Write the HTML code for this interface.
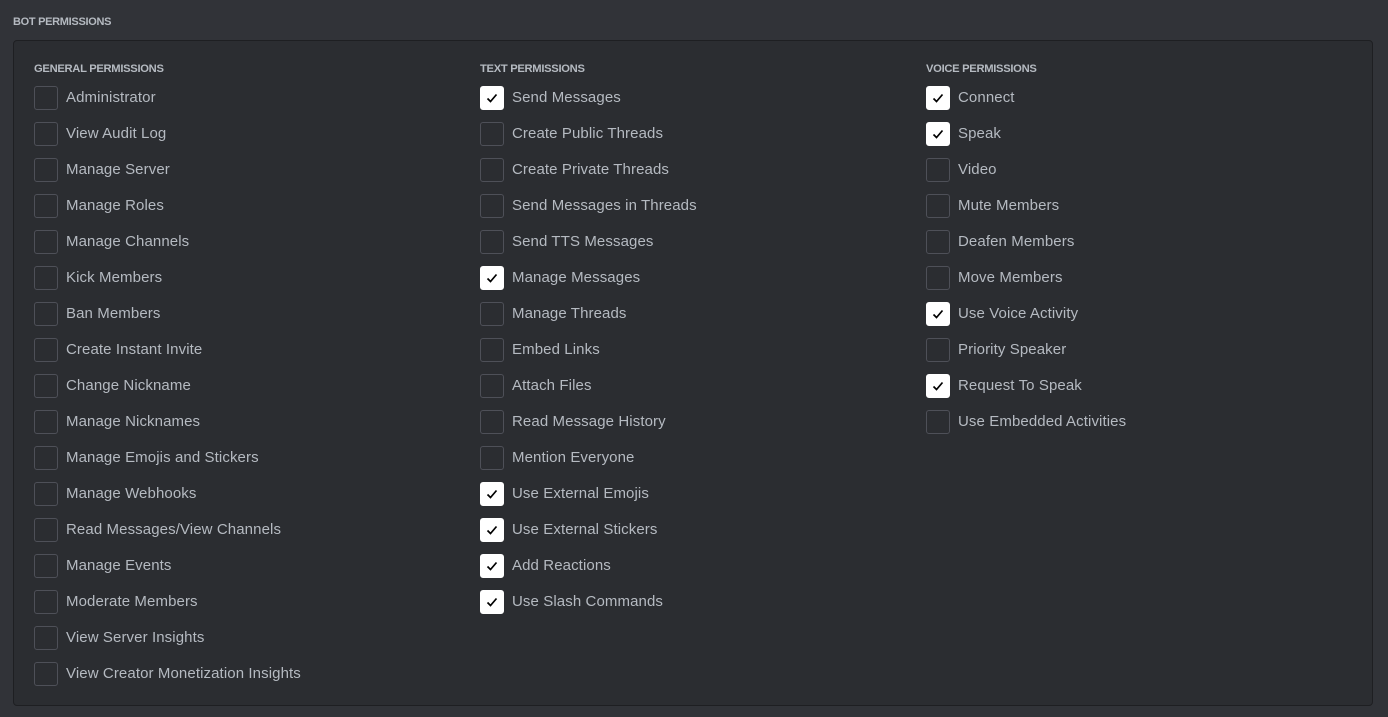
<!DOCTYPE html>
<html><head><style>
body{margin:0;width:1388px;height:717px;background:#313338;font-family:"Liberation Sans",sans-serif;overflow:hidden;position:relative}
.t{position:absolute;left:13px;top:16px;font-size:11px;font-weight:bold;color:#b5bac1;letter-spacing:-0.3px}
.p{position:absolute;left:13px;top:40px;width:1358px;height:664px;border:1px solid #1e1f22;border-radius:4px;background:#2b2d31}
.c{position:absolute;top:21px}
.h{font-size:11.2px;font-weight:bold;color:#b5bac1;height:24px;line-height:14px;letter-spacing:-0.3px}
.r{height:36px;display:flex;align-items:flex-start;font-size:15px;color:#b5bac1;letter-spacing:0.1px}
.b{width:22px;height:22px;border:1px solid #4e5058;border-radius:3px;margin-right:8px;box-sizing:content-box;display:flex;align-items:center;justify-content:center}
.k{background:#fff;border-color:#fff}
.r span{line-height:24px}
</style></head><body>
<div class="t">BOT PERMISSIONS</div>
<div class="p">
<div class="c" style="left:20px">
<div class="h">GENERAL PERMISSIONS</div>
<div class="r"><div class="b"></div><span>Administrator</span></div>
<div class="r"><div class="b"></div><span>View Audit Log</span></div>
<div class="r"><div class="b"></div><span>Manage Server</span></div>
<div class="r"><div class="b"></div><span>Manage Roles</span></div>
<div class="r"><div class="b"></div><span>Manage Channels</span></div>
<div class="r"><div class="b"></div><span>Kick Members</span></div>
<div class="r"><div class="b"></div><span>Ban Members</span></div>
<div class="r"><div class="b"></div><span>Create Instant Invite</span></div>
<div class="r"><div class="b"></div><span>Change Nickname</span></div>
<div class="r"><div class="b"></div><span>Manage Nicknames</span></div>
<div class="r"><div class="b"></div><span>Manage Emojis and Stickers</span></div>
<div class="r"><div class="b"></div><span>Manage Webhooks</span></div>
<div class="r"><div class="b"></div><span>Read Messages/View Channels</span></div>
<div class="r"><div class="b"></div><span>Manage Events</span></div>
<div class="r"><div class="b"></div><span>Moderate Members</span></div>
<div class="r"><div class="b"></div><span>View Server Insights</span></div>
<div class="r"><div class="b"></div><span>View Creator Monetization Insights</span></div>
</div>
<div class="c" style="left:466px">
<div class="h">TEXT PERMISSIONS</div>
<div class="r"><div class="b k"><svg width="14" height="14" viewBox="0 0 14 14"><path d="M2.5 7.5l3 3L11.5 3.5" fill="none" stroke="#000" stroke-width="1.7"/></svg></div><span>Send Messages</span></div>
<div class="r"><div class="b"></div><span>Create Public Threads</span></div>
<div class="r"><div class="b"></div><span>Create Private Threads</span></div>
<div class="r"><div class="b"></div><span>Send Messages in Threads</span></div>
<div class="r"><div class="b"></div><span>Send TTS Messages</span></div>
<div class="r"><div class="b k"><svg width="14" height="14" viewBox="0 0 14 14"><path d="M2.5 7.5l3 3L11.5 3.5" fill="none" stroke="#000" stroke-width="1.7"/></svg></div><span>Manage Messages</span></div>
<div class="r"><div class="b"></div><span>Manage Threads</span></div>
<div class="r"><div class="b"></div><span>Embed Links</span></div>
<div class="r"><div class="b"></div><span>Attach Files</span></div>
<div class="r"><div class="b"></div><span>Read Message History</span></div>
<div class="r"><div class="b"></div><span>Mention Everyone</span></div>
<div class="r"><div class="b k"><svg width="14" height="14" viewBox="0 0 14 14"><path d="M2.5 7.5l3 3L11.5 3.5" fill="none" stroke="#000" stroke-width="1.7"/></svg></div><span>Use External Emojis</span></div>
<div class="r"><div class="b k"><svg width="14" height="14" viewBox="0 0 14 14"><path d="M2.5 7.5l3 3L11.5 3.5" fill="none" stroke="#000" stroke-width="1.7"/></svg></div><span>Use External Stickers</span></div>
<div class="r"><div class="b k"><svg width="14" height="14" viewBox="0 0 14 14"><path d="M2.5 7.5l3 3L11.5 3.5" fill="none" stroke="#000" stroke-width="1.7"/></svg></div><span>Add Reactions</span></div>
<div class="r"><div class="b k"><svg width="14" height="14" viewBox="0 0 14 14"><path d="M2.5 7.5l3 3L11.5 3.5" fill="none" stroke="#000" stroke-width="1.7"/></svg></div><span>Use Slash Commands</span></div>
</div>
<div class="c" style="left:912px">
<div class="h">VOICE PERMISSIONS</div>
<div class="r"><div class="b k"><svg width="14" height="14" viewBox="0 0 14 14"><path d="M2.5 7.5l3 3L11.5 3.5" fill="none" stroke="#000" stroke-width="1.7"/></svg></div><span>Connect</span></div>
<div class="r"><div class="b k"><svg width="14" height="14" viewBox="0 0 14 14"><path d="M2.5 7.5l3 3L11.5 3.5" fill="none" stroke="#000" stroke-width="1.7"/></svg></div><span>Speak</span></div>
<div class="r"><div class="b"></div><span>Video</span></div>
<div class="r"><div class="b"></div><span>Mute Members</span></div>
<div class="r"><div class="b"></div><span>Deafen Members</span></div>
<div class="r"><div class="b"></div><span>Move Members</span></div>
<div class="r"><div class="b k"><svg width="14" height="14" viewBox="0 0 14 14"><path d="M2.5 7.5l3 3L11.5 3.5" fill="none" stroke="#000" stroke-width="1.7"/></svg></div><span>Use Voice Activity</span></div>
<div class="r"><div class="b"></div><span>Priority Speaker</span></div>
<div class="r"><div class="b k"><svg width="14" height="14" viewBox="0 0 14 14"><path d="M2.5 7.5l3 3L11.5 3.5" fill="none" stroke="#000" stroke-width="1.7"/></svg></div><span>Request To Speak</span></div>
<div class="r"><div class="b"></div><span>Use Embedded Activities</span></div>
</div>
</div>
</body></html>
